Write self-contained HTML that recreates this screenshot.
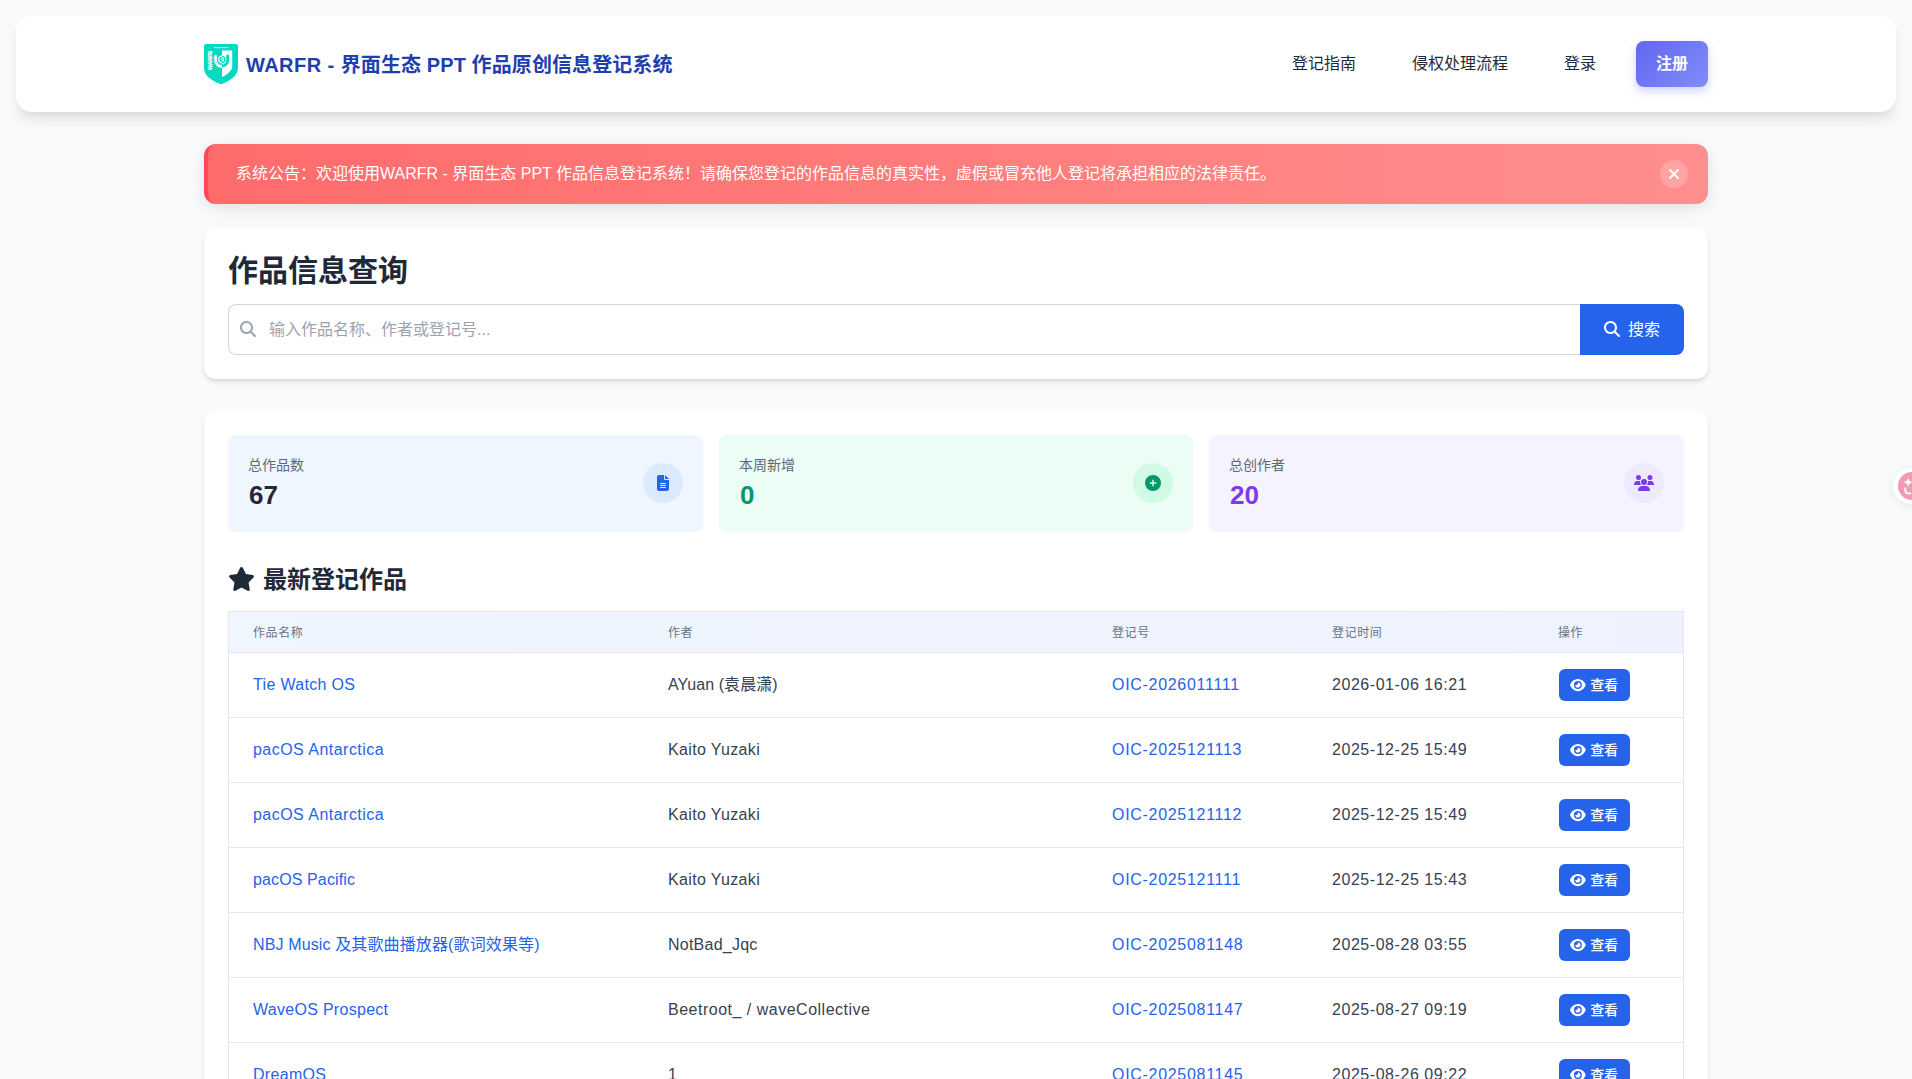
<!DOCTYPE html>
<html lang="zh-CN">
<head>
<meta charset="utf-8">
<title>WARFR - 界面生态 PPT 作品原创信息登记系统</title>
<style>
*{box-sizing:border-box;margin:0;padding:0}
html,body{width:1912px;height:1079px;overflow:hidden}
body{background:#f8fafc;font-family:"Liberation Sans","Noto Sans CJK SC",sans-serif;color:#1f2937;font-size:16px;line-height:24px;position:relative}
a{text-decoration:none;color:inherit}
.nav{position:absolute;left:16px;top:16px;width:1880px;height:96px;background:#fff;border-radius:16px;box-shadow:0 10px 15px -3px rgba(0,0,0,.1),0 4px 6px -2px rgba(0,0,0,.05)}
.brand{position:absolute;left:188px;top:28px;height:40px;display:flex;align-items:center}
.brand svg{display:block;width:34px;height:40px}
.brand span{margin-left:8px;font-size:20px;font-weight:700;color:#1e40af;white-space:nowrap;letter-spacing:.1px;padding-top:2px}
.brand span b{letter-spacing:.45px}
.links{position:absolute;right:188px;top:24px;height:48px;display:flex;align-items:center}
.links a{font-size:16px;color:#1f2937;padding:0 28px;white-space:nowrap}
.links a.reg{display:flex;align-items:center;justify-content:center;width:72px;height:46px;padding:0;margin-left:12px;border-radius:8px;color:#fff;font-weight:700;background:linear-gradient(135deg,#6366f1,#818cf8);box-shadow:0 4px 10px rgba(99,102,241,.3)}
.alert{position:absolute;left:204px;top:144px;width:1504px;height:60px;border-radius:12px;border-left:4px solid #ff4757;background:linear-gradient(90deg,#ff6b6b,#ff8e8e);box-shadow:0 4px 15px rgba(0,0,0,.1);color:#fff}
.alert p{position:absolute;left:28px;top:18px;font-size:16px;line-height:24px;white-space:nowrap}
.alert .x{position:absolute;left:1452px;top:16px;width:28px;height:28px;border-radius:50%;background:rgba(255,255,255,.2)}
.alert .x svg{position:absolute;left:8px;top:6px;width:12px;height:16px}
.card{position:absolute;left:204px;width:1504px;background:#fff;border-radius:12px;box-shadow:0 4px 6px -1px rgba(0,0,0,.1),0 2px 4px -1px rgba(0,0,0,.06)}
.search{top:228px;height:151px}
.search h1{position:absolute;left:24px;top:23px;font-size:30px;line-height:40px;font-weight:700;color:#1f2937}
.search .inp{position:absolute;left:24px;top:76px;width:1352px;height:51px;border:1px solid #d1d5db;border-right:none;border-radius:8px 0 0 8px;background:#fff}
.search .inp svg{position:absolute;left:11px;top:16px;width:16px;height:16px}
.search .inp span{position:absolute;left:40px;top:13px;color:#9ca3af;font-size:16px;line-height:24px}
.search .btn{position:absolute;left:1376px;top:76px;width:104px;height:51px;background:#2563eb;border-radius:0 8px 8px 0;color:#fff;display:flex;align-items:center;justify-content:center;font-size:16px;padding-top:1px}
.search .btn svg{width:16px;height:16px;margin-right:8px;margin-top:-2px}
.main{top:411px;height:700px;border-radius:12px 12px 0 0}
.stat{position:absolute;top:24px;height:96px;border-radius:8px;box-shadow:0 1px 2px rgba(0,0,0,.05)}
.stat .l{position:absolute;left:20px;top:20px;font-size:14px;line-height:20px;color:#5f6875}
.stat .n{position:absolute;left:21px;top:44px;font-size:26px;line-height:32px;font-weight:700}
.stat .ic{position:absolute;right:20px;top:28px;width:40px;height:40px;border-radius:50%;display:flex;align-items:center;justify-content:center}
.h2{position:absolute;left:24px;top:153px;height:32px;display:flex;align-items:center;font-size:24px;font-weight:700;color:#1f2937}
.h2 svg{width:27px;height:24px;margin-right:8px;margin-top:-2px}
.tbl{position:absolute;left:24px;top:200px;width:1456px;border:1px solid #e5e7eb;border-bottom:none}
.tr{display:flex;height:65px;border-bottom:1px solid #e5e7eb;align-items:center;font-size:16px}
.tr.th{height:41px;background:linear-gradient(90deg,#eff6ff,#eef2ff);font-size:12px;color:#6b7280;letter-spacing:.6px;padding-top:2px}
.tr>div{padding-left:24px;white-space:nowrap}
.c1{width:415px}.c2{width:444px}.c3{width:220px}.c4{width:226px}.c5{width:149px}
.tr a{color:#2563eb}
.tr .c2,.tr .c4{color:#374151}
.tr .c3{letter-spacing:.7px}.tr .c4{letter-spacing:.55px}
.th .c2,.th .c4{color:#6b7280}
.th .c3,.th .c4{letter-spacing:.6px}
.tr .c5{padding-left:25px}.th .c5{padding-left:24px}
.vb{display:inline-flex;align-items:center;justify-content:center;width:71px;height:32px;background:#2563eb;border-radius:6px;color:#fff!important;font-size:14px;font-weight:500;vertical-align:middle}
.vb svg{width:15.75px;height:14px;margin-right:4px;margin-top:-1px;margin-left:-.5px}
.fab{position:absolute;left:1893px;top:468px;width:36px;height:36px;border-radius:50%;background:#fff;box-shadow:0 2px 8px rgba(0,0,0,.08)}
.fab svg{position:absolute;left:5px;top:4px;width:28px;height:28px}
</style>
</head>
<body>
<div class="nav">
  <a class="brand">
    <svg viewBox="0 0 34 40">
      <defs><clipPath id="cl"><rect x="0" y="0" width="18" height="40"/></clipPath><clipPath id="cr"><rect x="18" y="0" width="16" height="40"/></clipPath></defs>
      <path d="M2.200 0H31.800A2.200 2.200 0 0 1 34 2.200V23.500C34 31.800 26.500 36.500 18.450 39.650Q17 40.300 15.550 39.650C7.500 36.500 0 31.800 0 23.500V2.200A2.200 2.200 0 0 1 2.200 0Z" fill="#05d9c2"/>
      <path d="M18 6.400H28.200V22.500C28.200 27 22 31 18 33.100Z" fill="#fff"/>
      <g clip-path="url(#cl)">
        <path d="M10.200 12.200A1.200 1.200 0 0 1 11.400 11H11.700A1.200 1.200 0 0 1 12.900 12.200V16.200A5.100 5.100 0 0 0 18 21.300V24A7.800 7.800 0 0 1 10.200 16.200Z" fill="#fff"/>
        <rect x="9.500" y="17.700" width="4" height="1" fill="#7febdf"/>
        <circle cx="18" cy="15.400" r="3.300" fill="none" stroke="#fff" stroke-width="1.200"/>
        <circle cx="18" cy="15.400" r="1.300" fill="#baf5ee"/>
      </g>
      <g clip-path="url(#cr)">
        <path d="M25.200 11.800A1.400 1.400 0 0 0 23.800 10.400H23.600A1.400 1.400 0 0 0 22.200 11.800V16.200A4.200 4.200 0 0 1 18 20.400V23.400A7.200 7.200 0 0 0 25.200 16.200Z" fill="#05d9c2"/>
        <circle cx="18" cy="15.400" r="3" fill="none" stroke="#05d9c2" stroke-width="1.300"/>
        <circle cx="18" cy="15.400" r="1.100" fill="#05d9c2"/>
      </g>
      <text transform="translate(7.800 25.900) rotate(-90)" font-family="Liberation Sans, sans-serif" font-size="5.300" font-weight="700" fill="#fff" stroke="#fff" stroke-width=".3" textLength="19" lengthAdjust="spacingAndGlyphs">WARFR</text>
      <text x="17" y="3.950" text-anchor="middle" font-family="Liberation Sans, sans-serif" font-size="2.300" font-weight="700" fill="#c4f7f0" stroke="#c4f7f0" stroke-width=".25" textLength="13.800" lengthAdjust="spacingAndGlyphs">WARFR ECO</text>
    </svg>
    <span><b>WARFR - </b>界面生态 PPT 作品原创信息登记系统</span>
  </a>
  <div class="links">
    <a>登记指南</a><a>侵权处理流程</a><a>登录</a><a class="reg">注册</a>
  </div>
</div>

<div class="alert">
  <p>系统公告：欢迎使用WARFR - 界面生态 PPT 作品信息登记系统！请确保您登记的作品信息的真实性，虚假或冒充他人登记将承担相应的法律责任。</p>
  <div class="x"><svg viewBox="0 0 384 512"><path fill="#fff" d="M342.600 150.600c12.500-12.500 12.500-32.800 0-45.300s-32.800-12.500-45.300 0L192 210.700 86.600 105.400c-12.500-12.500-32.800-12.500-45.300 0s-12.500 32.800 0 45.300L146.700 256 41.400 361.400c-12.500 12.500-12.500 32.800 0 45.300s32.800 12.500 45.300 0L192 301.300 297.400 406.600c12.500 12.500 32.800 12.500 45.300 0s12.500-32.800 0-45.300L237.300 256 342.600 150.600z"/></svg></div>
</div>

<div class="card search">
  <h1>作品信息查询</h1>
  <div class="inp">
    <svg viewBox="0 0 512 512"><path fill="#9ca3af" d="M416 208c0 45.900-14.900 88.300-40 122.700L502.600 457.400c12.500 12.500 12.500 32.800 0 45.300s-32.800 12.500-45.300 0L330.700 376c-34.400 25.200-76.800 40-122.700 40C93.100 416 0 322.900 0 208S93.100 0 208 0S416 93.100 416 208zM208 352a144 144 0 1 0 0-288 144 144 0 1 0 0 288z"/></svg>
    <span>输入作品名称、作者或登记号...</span>
  </div>
  <a class="btn"><svg viewBox="0 0 512 512"><path fill="#fff" d="M416 208c0 45.900-14.900 88.300-40 122.700L502.600 457.400c12.500 12.500 12.500 32.800 0 45.300s-32.800 12.500-45.300 0L330.700 376c-34.400 25.200-76.800 40-122.700 40C93.100 416 0 322.900 0 208S93.100 0 208 0S416 93.100 416 208zM208 352a144 144 0 1 0 0-288 144 144 0 1 0 0 288z"/></svg>搜索</a>
</div>

<div class="card main">
  <div class="stat" style="left:24px;width:475px;background:#eff6ff">
    <div class="l">总作品数</div><div class="n" style="color:#1f2937">67</div>
    <div class="ic" style="background:#dbeafe"><svg width="12" height="16" viewBox="0 0 384 512"><path fill="#2563eb" d="M64 0C28.700 0 0 28.700 0 64V448c0 35.300 28.700 64 64 64H320c35.300 0 64-28.700 64-64V160H256c-17.700 0-32-14.300-32-32V0H64zM256 0V128H384L256 0zM112 256H272c8.800 0 16 7.200 16 16s-7.200 16-16 16H112c-8.800 0-16-7.200-16-16s7.200-16 16-16zm0 64H272c8.800 0 16 7.200 16 16s-7.200 16-16 16H112c-8.800 0-16-7.200-16-16s7.200-16 16-16zm0 64H272c8.800 0 16 7.200 16 16s-7.200 16-16 16H112c-8.800 0-16-7.200-16-16s7.200-16 16-16z"/></svg></div>
  </div>
  <div class="stat" style="left:515px;width:474px;background:#ecfdf5">
    <div class="l">本周新增</div><div class="n" style="color:#059669">0</div>
    <div class="ic" style="background:#d1fae5"><svg width="16" height="16" viewBox="0 0 512 512"><path fill="#059669" d="M256 512A256 256 0 1 0 256 0a256 256 0 1 0 0 512zM232 344V280H168c-13.300 0-24-10.700-24-24s10.700-24 24-24h64V168c0-13.300 10.700-24 24-24s24 10.700 24 24v64h64c13.300 0 24 10.700 24 24s-10.700 24-24 24H280v64c0 13.300-10.700 24-24 24s-24-10.700-24-24z"/></svg></div>
  </div>
  <div class="stat" style="left:1005px;width:475px;background:#f5f3ff">
    <div class="l">总创作者</div><div class="n" style="color:#7c3aed">20</div>
    <div class="ic" style="background:#ede9fe"><svg width="20" height="16" viewBox="0 0 640 512"><path fill="#7c3aed" d="M144 0a80 80 0 1 1 0 160A80 80 0 1 1 144 0zM512 0a80 80 0 1 1 0 160A80 80 0 1 1 512 0zM0 298.700C0 239.800 47.800 192 106.700 192h42.700c15.900 0 31 3.500 44.600 9.700c-1.300 7.200-1.900 14.700-1.900 22.300c0 38.200 16.800 72.500 43.300 96c-.2 0-.4 0-.7 0H21.300C9.600 320 0 310.400 0 298.700zM405.300 320c-.2 0-.4 0-.7 0c26.600-23.500 43.300-57.800 43.300-96c0-7.600-.7-15-1.900-22.300c13.600-6.300 28.700-9.700 44.600-9.700h42.700C592.200 192 640 239.800 640 298.700c0 11.800-9.600 21.300-21.300 21.300H405.300zM224 224a96 96 0 1 1 192 0 96 96 0 1 1 -192 0zM128 485.300C128 411.700 187.700 352 261.300 352H378.700C452.300 352 512 411.700 512 485.300c0 14.700-11.900 26.700-26.700 26.700H154.700c-14.700 0-26.700-11.900-26.700-26.700z"/></svg></div>
  </div>

  <div class="h2"><svg viewBox="0 0 576 512"><path fill="#1f2937" d="M316.900 18C311.600 7 300.400 0 288.100 0s-23.400 7-28.800 18L195 150.300 51.400 171.500c-12 1.800-22 10.200-25.700 21.700s-.7 24.200 7.900 32.700L137.800 329 113.200 474.700c-2 12 3 24.200 12.900 31.300s23 8 33.800 2.300l128.300-68.500 128.300 68.500c10.800 5.700 23.900 4.900 33.800-2.300s14.900-19.300 12.900-31.300L438.500 329 542.700 225.900c8.600-8.500 11.700-21.200 7.900-32.700s-13.700-19.900-25.700-21.700L381.200 150.300 316.900 18z"/></svg>最新登记作品</div>

  <div class="tbl">
    <div class="tr th"><div class="c1">作品名称</div><div class="c2">作者</div><div class="c3">登记号</div><div class="c4">登记时间</div><div class="c5">操作</div></div>
    <div class="tr"><div class="c1"><a style="letter-spacing:0.33px">Tie Watch OS</a></div><div class="c2" style="letter-spacing:0.05px">AYuan (袁晨潇)</div><div class="c3"><a>OIC-2026011111</a></div><div class="c4">2026-01-06 16:21</div><div class="c5"><a class="vb"><svg viewBox="0 0 576 512"><path fill="#fff" d="M288 32c-80.800 0-145.500 36.800-192.600 80.600C48.600 156 17.300 208 2.500 243.700c-3.300 7.900-3.300 16.700 0 24.600C17.300 304 48.600 356 95.400 399.400C142.500 443.200 207.200 480 288 480s145.500-36.800 192.600-80.600c46.800-43.500 78.100-95.400 93-131.100c3.300-7.900 3.300-16.700 0-24.600c-14.900-35.700-46.200-87.700-93-131.100C433.500 68.800 368.800 32 288 32zM144 256a144 144 0 1 1 288 0 144 144 0 1 1 -288 0zm144-64c0 35.300-28.700 64-64 64c-7.100 0-13.900-1.200-20.300-3.300c-5.500-1.800-11.900 1.600-11.700 7.400c.3 6.900 1.300 13.800 3.200 20.700c13.700 51.200 66.400 81.600 117.600 67.900s81.600-66.400 67.900-117.600c-11.100-41.500-47.800-69.400-88.600-71.100c-5.800-.2-9.200 6.100-7.400 11.700c2.100 6.400 3.300 13.200 3.300 20.300z"/></svg>查看</a></div></div>
    <div class="tr"><div class="c1"><a style="letter-spacing:0.47px">pacOS Antarctica</a></div><div class="c2" style="letter-spacing:0.36px">Kaito Yuzaki</div><div class="c3"><a>OIC-2025121113</a></div><div class="c4">2025-12-25 15:49</div><div class="c5"><a class="vb"><svg viewBox="0 0 576 512"><path fill="#fff" d="M288 32c-80.800 0-145.500 36.800-192.600 80.600C48.600 156 17.300 208 2.500 243.700c-3.300 7.900-3.300 16.700 0 24.600C17.300 304 48.600 356 95.400 399.400C142.500 443.200 207.200 480 288 480s145.500-36.800 192.600-80.600c46.800-43.500 78.100-95.400 93-131.100c3.300-7.900 3.300-16.700 0-24.600c-14.900-35.700-46.200-87.700-93-131.100C433.500 68.800 368.800 32 288 32zM144 256a144 144 0 1 1 288 0 144 144 0 1 1 -288 0zm144-64c0 35.300-28.700 64-64 64c-7.100 0-13.900-1.200-20.300-3.300c-5.500-1.800-11.900 1.600-11.700 7.400c.3 6.900 1.300 13.800 3.200 20.700c13.700 51.200 66.400 81.600 117.600 67.900s81.600-66.400 67.900-117.600c-11.100-41.500-47.800-69.400-88.600-71.100c-5.800-.2-9.200 6.100-7.400 11.700c2.100 6.400 3.300 13.200 3.300 20.300z"/></svg>查看</a></div></div>
    <div class="tr"><div class="c1"><a style="letter-spacing:0.47px">pacOS Antarctica</a></div><div class="c2" style="letter-spacing:0.36px">Kaito Yuzaki</div><div class="c3"><a>OIC-2025121112</a></div><div class="c4">2025-12-25 15:49</div><div class="c5"><a class="vb"><svg viewBox="0 0 576 512"><path fill="#fff" d="M288 32c-80.800 0-145.500 36.800-192.600 80.600C48.600 156 17.300 208 2.500 243.700c-3.300 7.900-3.300 16.700 0 24.600C17.300 304 48.600 356 95.400 399.400C142.500 443.200 207.200 480 288 480s145.500-36.800 192.600-80.600c46.800-43.500 78.100-95.400 93-131.100c3.300-7.900 3.300-16.700 0-24.600c-14.900-35.700-46.200-87.700-93-131.100C433.500 68.800 368.800 32 288 32zM144 256a144 144 0 1 1 288 0 144 144 0 1 1 -288 0zm144-64c0 35.300-28.700 64-64 64c-7.100 0-13.900-1.200-20.300-3.300c-5.500-1.800-11.900 1.600-11.700 7.400c.3 6.900 1.300 13.800 3.200 20.700c13.700 51.200 66.400 81.600 117.600 67.900s81.600-66.400 67.900-117.600c-11.100-41.500-47.800-69.400-88.600-71.100c-5.800-.2-9.200 6.100-7.400 11.700c2.100 6.400 3.300 13.200 3.300 20.300z"/></svg>查看</a></div></div>
    <div class="tr"><div class="c1"><a style="letter-spacing:0.12px">pacOS Pacific</a></div><div class="c2" style="letter-spacing:0.36px">Kaito Yuzaki</div><div class="c3"><a>OIC-2025121111</a></div><div class="c4">2025-12-25 15:43</div><div class="c5"><a class="vb"><svg viewBox="0 0 576 512"><path fill="#fff" d="M288 32c-80.800 0-145.500 36.800-192.600 80.600C48.600 156 17.300 208 2.500 243.700c-3.300 7.900-3.300 16.700 0 24.600C17.300 304 48.600 356 95.400 399.400C142.500 443.200 207.200 480 288 480s145.500-36.800 192.600-80.600c46.800-43.500 78.100-95.400 93-131.100c3.300-7.900 3.300-16.700 0-24.600c-14.900-35.700-46.200-87.700-93-131.100C433.500 68.800 368.800 32 288 32zM144 256a144 144 0 1 1 288 0 144 144 0 1 1 -288 0zm144-64c0 35.300-28.700 64-64 64c-7.100 0-13.900-1.200-20.300-3.300c-5.500-1.800-11.900 1.600-11.700 7.400c.3 6.900 1.300 13.800 3.200 20.700c13.700 51.200 66.400 81.600 117.600 67.900s81.600-66.400 67.900-117.600c-11.100-41.500-47.800-69.400-88.600-71.100c-5.800-.2-9.200 6.100-7.400 11.700c2.100 6.400 3.300 13.200 3.300 20.300z"/></svg>查看</a></div></div>
    <div class="tr"><div class="c1"><a style="letter-spacing:0.13px">NBJ Music 及其歌曲播放器(歌词效果等)</a></div><div class="c2" style="letter-spacing:0.24px">NotBad_Jqc</div><div class="c3"><a>OIC-2025081148</a></div><div class="c4">2025-08-28 03:55</div><div class="c5"><a class="vb"><svg viewBox="0 0 576 512"><path fill="#fff" d="M288 32c-80.800 0-145.500 36.800-192.600 80.600C48.600 156 17.300 208 2.500 243.700c-3.300 7.900-3.300 16.700 0 24.600C17.300 304 48.600 356 95.400 399.400C142.500 443.200 207.200 480 288 480s145.500-36.800 192.600-80.600c46.800-43.500 78.100-95.400 93-131.100c3.300-7.900 3.300-16.700 0-24.600c-14.900-35.700-46.200-87.700-93-131.100C433.500 68.800 368.800 32 288 32zM144 256a144 144 0 1 1 288 0 144 144 0 1 1 -288 0zm144-64c0 35.300-28.700 64-64 64c-7.100 0-13.900-1.200-20.300-3.300c-5.500-1.800-11.900 1.600-11.700 7.400c.3 6.900 1.300 13.800 3.200 20.700c13.700 51.200 66.400 81.600 117.600 67.900s81.600-66.400 67.900-117.600c-11.100-41.500-47.800-69.400-88.600-71.100c-5.800-.2-9.200 6.100-7.400 11.700c2.100 6.400 3.300 13.200 3.300 20.300z"/></svg>查看</a></div></div>
    <div class="tr"><div class="c1"><a style="letter-spacing:0.29px">WaveOS Prospect</a></div><div class="c2" style="letter-spacing:0.5px">Beetroot_ / waveCollective</div><div class="c3"><a>OIC-2025081147</a></div><div class="c4">2025-08-27 09:19</div><div class="c5"><a class="vb"><svg viewBox="0 0 576 512"><path fill="#fff" d="M288 32c-80.800 0-145.500 36.800-192.600 80.600C48.600 156 17.300 208 2.500 243.700c-3.300 7.900-3.300 16.700 0 24.600C17.300 304 48.600 356 95.400 399.400C142.500 443.200 207.200 480 288 480s145.500-36.800 192.600-80.600c46.800-43.500 78.100-95.400 93-131.100c3.300-7.900 3.300-16.700 0-24.600c-14.900-35.700-46.200-87.700-93-131.100C433.500 68.800 368.800 32 288 32zM144 256a144 144 0 1 1 288 0 144 144 0 1 1 -288 0zm144-64c0 35.300-28.700 64-64 64c-7.100 0-13.900-1.200-20.300-3.300c-5.500-1.800-11.900 1.600-11.700 7.400c.3 6.900 1.300 13.800 3.200 20.700c13.700 51.200 66.400 81.600 117.600 67.900s81.600-66.400 67.900-117.600c-11.100-41.500-47.800-69.400-88.600-71.100c-5.800-.2-9.200 6.100-7.400 11.700c2.100 6.400 3.300 13.200 3.300 20.300z"/></svg>查看</a></div></div>
    <div class="tr"><div class="c1"><a style="letter-spacing:0.3px">DreamOS</a></div><div class="c2" style="letter-spacing:0px">1</div><div class="c3"><a>OIC-2025081145</a></div><div class="c4">2025-08-26 09:22</div><div class="c5"><a class="vb"><svg viewBox="0 0 576 512"><path fill="#fff" d="M288 32c-80.800 0-145.500 36.800-192.600 80.600C48.600 156 17.300 208 2.500 243.700c-3.300 7.900-3.300 16.700 0 24.600C17.300 304 48.600 356 95.400 399.400C142.500 443.200 207.200 480 288 480s145.500-36.800 192.600-80.600c46.800-43.500 78.100-95.400 93-131.100c3.300-7.900 3.300-16.700 0-24.600c-14.900-35.700-46.200-87.700-93-131.100C433.500 68.800 368.800 32 288 32zM144 256a144 144 0 1 1 288 0 144 144 0 1 1 -288 0zm144-64c0 35.300-28.700 64-64 64c-7.100 0-13.900-1.200-20.300-3.300c-5.500-1.800-11.900 1.600-11.700 7.400c.3 6.900 1.300 13.800 3.200 20.700c13.700 51.200 66.400 81.600 117.600 67.900s81.600-66.400 67.900-117.600c-11.100-41.500-47.800-69.400-88.600-71.100c-5.800-.2-9.200 6.100-7.400 11.700c2.100 6.400 3.300 13.200 3.300 20.300z"/></svg>查看</a></div></div>
  </div>
</div>

<div class="fab"><svg viewBox="0 0 28 28"><circle cx="14" cy="14" r="14" fill="#f09ab3"/><path d="M10.200 5.500C10.700 8.400 11.600 9.300 14.800 10.200C11.600 11.100 10.700 12 10.200 15.400C9.700 12 8.800 11.100 5.600 10.200C8.800 9.300 9.700 8.400 10.200 5.500Z" fill="#fff"/><path d="M7.300 16.300V18.600Q7.300 21.400 10.100 21.400H12.500" fill="none" stroke="#fff" stroke-width="1.900" stroke-linecap="round"/></svg></div>
</body>
</html>
